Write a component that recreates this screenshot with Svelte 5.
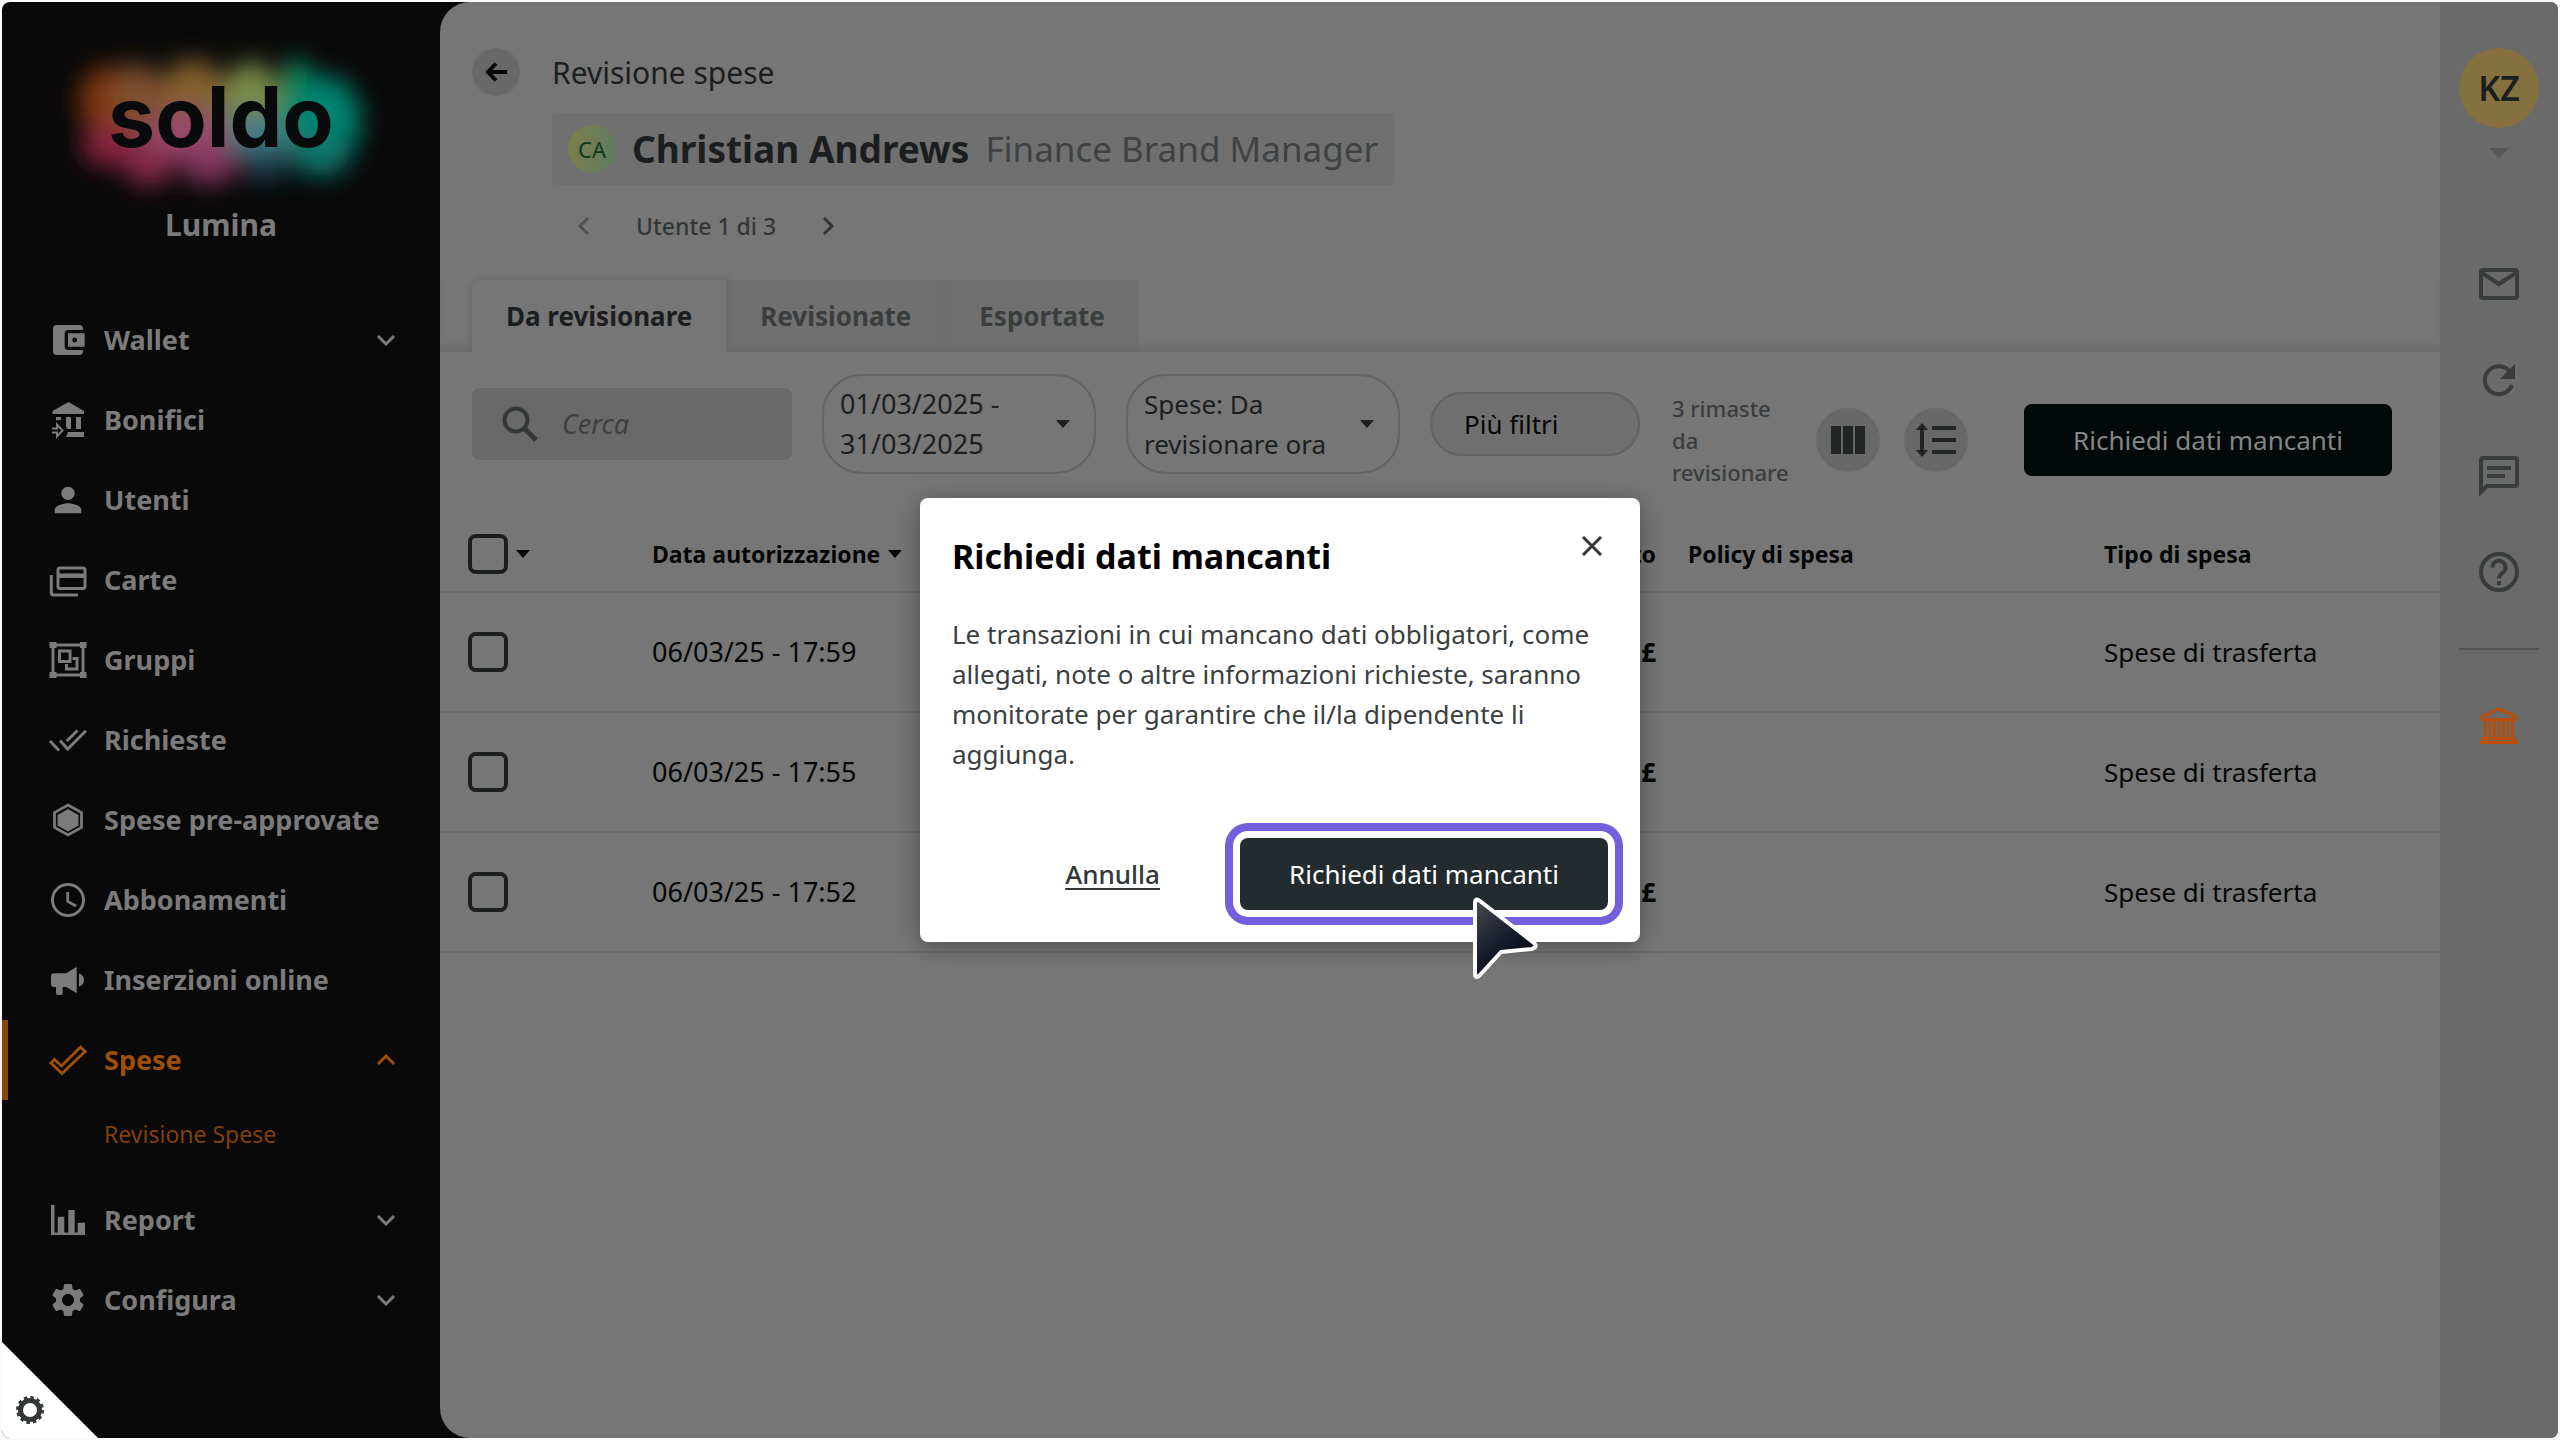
<script>
  const before = [
    { icon: 'wallet', label: 'Wallet', chevron: true },
    { icon: 'transfer', label: 'Bonifici' },
    { icon: 'user', label: 'Utenti' },
    { icon: 'cards', label: 'Carte' },
    { icon: 'group', label: 'Gruppi' },
    { icon: 'requests', label: 'Richieste' },
    { icon: 'hexagon', label: 'Spese pre-approvate' },
    { icon: 'clock', label: 'Abbonamenti' },
    { icon: 'horn', label: 'Inserzioni online' }
  ];
  const after = [
    { icon: 'report', label: 'Report', chevron: true },
    { icon: 'gear', label: 'Configura', chevron: true }
  ];
  const rows = [
    { id: 1, date: '06/03/25 - 17:59', amount: '£', type: 'Spese di trasferta' },
    { id: 2, date: '06/03/25 - 17:55', amount: '£', type: 'Spese di trasferta' },
    { id: 3, date: '06/03/25 - 17:52', amount: '£', type: 'Spese di trasferta' }
  ];
</script>

{#snippet icon(name)}
  <svg class="icon" viewBox="0 0 40 40" fill="none" stroke="currentColor" stroke-width="3" aria-hidden="true">
    {#if name === 'wallet'}
      <path transform="scale(1.6667)" fill="currentColor" stroke="none" d="M21 18v1c0 1.1-.9 2-2 2H5c-1.11 0-2-.9-2-2V5c0-1.1.89-2 2-2h14c1.1 0 2 .9 2 2v1h-9c-1.11 0-2 .9-2 2v8c0 1.1.89 2 2 2h9zm-9-2h10V8H12v8zm4-2.5c-.83 0-1.5-.67-1.5-1.5s.67-1.5 1.5-1.5 1.5.67 1.5 1.5-.67 1.5-1.5 1.5z" />
    {:else if name === 'transfer'}
      <path fill="currentColor" stroke="none" d="M4.5 11 20.5 2 36 11v3H4.5zM8 17h5v3l-4 0-1 1zM18 17h5v12h-4l-1-3zM28 17h5v12h-5zM20 32h16v5H18z" />
      <path stroke-width="2" d="M4 28.5h5v-4l5.5 6-5.5 6v-4H4" />
    {:else if name === 'user'}
      <path transform="scale(1.6667)" fill="currentColor" stroke="none" d="M12 12c2.21 0 4-1.79 4-4s-1.79-4-4-4-4 1.79-4 4 1.79 4 4 4zm0 2c-2.67 0-8 1.34-8 4v2h16v-2c0-2.66-5.33-4-8-4z" />
    {:else if name === 'cards'}
      <rect x="10" y="8" width="27" height="20.5" rx="2" />
      <path stroke-width="4.5" d="M10 15.7h27" />
      <path d="M3.3 15v17.500q0 2.500 2.500 2.500H30" />
    {:else if name === 'group'}
      <path stroke-width="3" d="M5 5h30v30H5z" />
      <path fill="currentColor" stroke="none" d="M1.500 2h7v6h-7zM32 2h6.500v6H32zM1.500 32h7v6h-7zM32 32h6.500v6H32z" />
      <path d="M11.500 11h10.500v10.500H11.500zM24.500 18.500H29V29H18.500V24" />
    {:else if name === 'requests'}
      <path d="M12 20.500l7.700 8.500L38 10.700M18.700 21 29.500 10.500M2 21l9 9.500" />
    {:else if name === 'hexagon'}
      <path stroke-width="2.800" d="M20 5l13.500 7.500v15L20 35 6.500 27.500v-15z" />
      <path fill="currentColor" stroke="none" d="M20 9l10.500 6v10.500L20 31.500 9.500 25.500V15z" />
    {:else if name === 'clock'}
      <circle cx="20" cy="20" r="15.5" />
      <path stroke-width="2.800" d="M19.700 12v9.500l8.300 4.500" />
    {:else if name === 'horn'}
      <path fill="currentColor" stroke="none" d="M6 13.300h12L28.700 7v26L18 27h-3.300v6q0 2-2 2H10q-2 0-2-2v-6H6q-3 0-3-3v-8q0-2.700 3-2.700zM31 13.500q5 1.500 5 6.500t-5 6.500z" />
    {:else if name === 'expense'}
      <path d="M3 23l3.500-3.500 7 6.500L32.500 7l4.500 4.500-23 22z" />
    {:else if name === 'report'}
      <path fill="currentColor" stroke="none" d="M3 5h3.500v27.500h3.200V16.700h6.600v15.800h4V10h6.400v22.500h3v-9.800H37V35H3z" />
    {:else if name === 'gear'}
      <path transform="scale(1.6667)" fill="currentColor" stroke="none" d="M19.140 12.940c.04-.3.060-.61.060-.94 0-.32-.02-.64-.07-.94l2.030-1.580c.18-.14.23-.41.12-.61l-1.920-3.320c-.12-.22-.37-.29-.59-.22l-2.390.96c-.5-.38-1.030-.7-1.620-.94l-.36-2.540c-.04-.24-.24-.41-.48-.41h-3.840c-.24 0-.43.17-.47.41l-.36 2.540c-.59.24-1.130.57-1.620.94l-2.390-.96c-.22-.08-.47 0-.59.22L2.740 8.870c-.12.21-.08.47.12.61l2.030 1.580c-.05.3-.09.63-.09.94s.02.64.07.94l-2.030 1.580c-.18.14-.23.41-.12.61l1.920 3.320c.12.22.37.29.59.22l2.390-.96c.5.38 1.030.7 1.620.94l.36 2.540c.05.24.24.41.48.41h3.840c.24 0 .44-.17.47-.41l.36-2.540c.59-.24 1.130-.56 1.620-.94l2.390.96c.22.08.47 0 .59-.22l1.920-3.320c.12-.22.070-.47-.12-.61l-2.010-1.580zM12 15.600c-1.980 0-3.600-1.620-3.600-3.600s1.620-3.600 3.600-3.600 3.600 1.620 3.600 3.600-1.620 3.600-3.600 3.600z" />
    {:else if name === 'mail'}
      <rect x="2" y="6" width="36" height="28" rx="2" stroke-width="4" />
      <path stroke-width="4" d="M3 9l17 11L37 9" />
    {:else if name === 'refresh'}
      <path stroke-width="4" d="M30 10.500A14 14 0 1 0 33 25" />
      <path fill="currentColor" stroke="none" d="M36 4v15H21z" />
    {:else if name === 'chat'}
      <path stroke-width="4" d="M4 2h32q2 0 2 2v24q0 2-2 2H8l-6 6V4q0-2 2-2zM8 12h24M8 20h18" />
    {:else if name === 'help'}
      <circle cx="20" cy="20" r="18" stroke-width="4" />
      <path stroke-width="4" d="M13.500 15.500a6.500 6.500 0 1 1 11 4.500q-4.500 3.500-4.500 6.500M20 29v4" />
    {:else if name === 'bank'}
      <path stroke-width="3" d="M3.500 13.500v-3L20 3l16.500 7.500v3zM6.500 14v18M15.500 14v18M24.500 14v18M33.500 14v18M2.500 36.500q0-4 4-4h27q4 0 4 4z" />
      <path stroke-width="2" d="M11 15v16M20 15v16M29 15v16" />
    {/if}
  </svg>
{/snippet}

{#snippet chevron(dir)}
  <svg class="chevron {dir}" viewBox="0 0 20 20" fill="none" stroke="currentColor" stroke-width="3" aria-hidden="true"><path d="M2 6l8 8 8-8" /></svg>
{/snippet}

{#snippet caret()}
  <svg class="caret" viewBox="0 0 14 8" fill="currentColor" aria-hidden="true"><path d="M0 0h14L7 8z" /></svg>
{/snippet}

<div class="page">
  <div class="frame">
    <aside class="sidebar">
      <div class="logo">
        <svg class="glow" viewBox="0 0 320 160" aria-hidden="true">
          <defs>
            <filter id="soft" filterUnits="userSpaceOnUse" x="-60" y="-60" width="440" height="280"><feGaussianBlur stdDeviation="12" /></filter>
          </defs>
          <g filter="url(#soft)">
            <rect x="40" y="50" width="110" height="62" rx="20" fill="#7c4a42" />
            <rect x="140" y="50" width="110" height="60" rx="20" fill="#4b7a62" />
            <ellipse cx="46" cy="62" rx="28" ry="36" fill="#80340e" />
            <ellipse cx="50" cy="106" rx="30" ry="20" fill="#8a2140" />
            <ellipse cx="88" cy="122" rx="26" ry="24" fill="#842747" />
            <ellipse cx="76" cy="56" rx="26" ry="32" fill="#80502f" />
            <ellipse cx="132" cy="50" rx="32" ry="30" fill="#84602e" />
            <ellipse cx="128" cy="94" rx="42" ry="24" fill="#98486a" />
            <ellipse cx="148" cy="124" rx="28" ry="20" fill="#83365c" />
            <ellipse cx="190" cy="52" rx="26" ry="30" fill="#7c8c4a" />
            <ellipse cx="198" cy="96" rx="32" ry="24" fill="#457a84" />
            <ellipse cx="204" cy="124" rx="24" ry="16" fill="#1c4050" />
            <ellipse cx="236" cy="60" rx="18" ry="42" fill="#108a5c" />
            <ellipse cx="264" cy="80" rx="36" ry="44" fill="#06836f" />
            <ellipse cx="260" cy="114" rx="30" ry="22" fill="#07746a" />
          </g>
        </svg>
        <span class="wordmark">soldo</span>
      </div>
      <div class="company">Lumina</div>
      <nav>
        {#each before as item}
          <a href="#{item.icon}">{@render icon(item.icon)}<span>{item.label}</span>{#if item.chevron}{@render chevron('down')}{/if}</a>
        {/each}
        <a class="active" href="#expense">{@render icon('expense')}<span>Spese</span>{@render chevron('up')}</a>
        <a class="sub" href="#review">Revisione Spese</a>
        {#each after as item}
          <a href="#{item.icon}">{@render icon(item.icon)}<span>{item.label}</span>{@render chevron('down')}</a>
        {/each}
      </nav>
      <button class="corner" aria-label="Impostazioni cookie">
        <svg viewBox="0 0 96 96" aria-hidden="true">
          <path d="M0 0l96 96H0z" fill="#fff" />
          <circle cx="28" cy="68" r="9.5" fill="none" stroke="#333738" stroke-width="5" />
          <circle cx="28" cy="68" r="12" fill="none" stroke="#333738" stroke-width="4" stroke-dasharray="3.300 2.983" />
        </svg>
      </button>
    </aside>

    <main>
      <header>
        <button class="back" aria-label="Indietro">
          <svg viewBox="0 0 22 20" fill="none" stroke="currentColor" stroke-width="4" aria-hidden="true"><path d="M11 1.500L3 10l8 8.500M3 10h19" /></svg>
        </button>
        <div class="heading">
          <h1>Revisione spese</h1>
          <div class="person">
            <span class="initials">CA</span>
            <strong>Christian Andrews</strong>
            <span class="role">Finance Brand Manager</span>
          </div>
          <div class="pager">
            <button class="off" aria-label="Precedente">{@render chevron('left')}</button>
            <span>Utente 1 di 3</span>
            <button aria-label="Successivo">{@render chevron('right')}</button>
          </div>
        </div>
      </header>

      <div class="tabs" role="tablist">
        <button role="tab" aria-selected="true" class="on">Da revisionare</button>
        <button role="tab" aria-selected="false">Revisionate</button>
        <button role="tab" aria-selected="false">Esportate</button>
      </div>

      <div class="toolbar">
        <div class="filters">
          <label class="search">
            <svg viewBox="0 0 36 36" fill="none" stroke="currentColor" aria-hidden="true"><circle cx="14" cy="14" r="11.5" stroke-width="4" /><path d="M22 22l12 12" stroke-width="5" /></svg>
            <input type="text" placeholder="Cerca" aria-label="Cerca" />
          </label>
          <button class="pill dates" aria-haspopup="dialog"><span>01/03/2025 -<br />31/03/2025</span>{@render caret()}</button>
          <button class="pill" aria-haspopup="listbox"><span>Spese: Da<br />revisionare ora</span>{@render caret()}</button>
          <button class="pill more">Più filtri</button>
        </div>
        <div class="tools">
          <p>3 rimaste da revisionare</p>
          <button class="round" aria-label="Colonne">
            <svg viewBox="0 0 40 40" fill="currentColor" aria-hidden="true"><path d="M3 6h10v28H3zM15 6h10v28H15zM27 6h10v28H27z" /></svg>
          </button>
          <button class="round" aria-label="Altezza righe">
            <svg viewBox="0 0 40 40" fill="currentColor" aria-hidden="true"><path d="M6 3l6 7H8v20h4l-6 7-6-7h4V10H0zM16 6h24v4H16zM16 18h24v4H16zM16 30h24v4H16z" /></svg>
          </button>
          <button class="primary dim">Richiedi dati mancanti</button>
        </div>
      </div>

      <table>
        <colgroup><col class="c-check" /><col /><col class="c-amount" /><col class="c-policy" /><col class="c-type" /></colgroup>
        <thead>
          <tr>
            <th><span class="pick"><input type="checkbox" aria-label="Seleziona tutto" />{@render caret()}</span></th>
            <th><span class="sort">Data autorizzazione{@render caret()}</span></th>
            <th class="num">Importo</th>
            <th>Policy di spesa</th>
            <th>Tipo di spesa</th>
          </tr>
        </thead>
        <tbody>
          {#each rows as row (row.id)}
            <tr>
              <td><span class="pick"><input type="checkbox" aria-label="Seleziona {row.date}" /></span></td>
              <td class="date">{row.date}</td>
              <td class="num">{row.amount}</td>
              <td></td>
              <td>{row.type}</td>
            </tr>
          {/each}
        </tbody>
      </table>
    </main>

    <aside class="rail">
      <button class="avatar">KZ</button>
      <svg class="railcaret" viewBox="0 0 20 10" aria-hidden="true"><path d="M0 0h20L10 10z" fill="#555758" /></svg>
      <div class="railicons">
        <button aria-label="Posta">{@render icon('mail')}</button>
        <button aria-label="Aggiorna">{@render icon('refresh')}</button>
        <button aria-label="Messaggi">{@render icon('chat')}</button>
        <button aria-label="Aiuto">{@render icon('help')}</button>
      </div>
      <hr />
      <button class="bank" aria-label="Banca">{@render icon('bank')}</button>
    </aside>
  </div>

  <div class="layer">
    <div class="modal" role="dialog" aria-labelledby="modal-title">
      <div class="modalhead">
        <h2 id="modal-title">Richiedi dati mancanti</h2>
        <button class="close" aria-label="Chiudi">
          <svg viewBox="0 0 20 20" fill="none" stroke="currentColor" stroke-width="3" aria-hidden="true"><path d="M1 1l18 18M19 1L1 19" /></svg>
        </button>
      </div>
      <p>Le transazioni in cui mancano dati obbligatori, come allegati, note o altre informazioni richieste, saranno monitorate per garantire che il/la dipendente li aggiunga.</p>
      <div class="actions">
        <button class="cancel">Annulla</button>
        <div class="target">
          <button class="primary">Richiedi dati mancanti</button>
          <svg class="cursor" viewBox="0 0 68 84" aria-hidden="true">
            <defs><linearGradient id="pointer" x1="0" y1="0" x2=".6" y2="1"><stop offset="0" stop-color="#4a4b50" /><stop offset=".6" stop-color="#161b2c" /><stop offset="1" stop-color="#080a10" /></linearGradient></defs>
            <path d="M4 7q0-6 5-2L63 47q4 4-2 6l-31 3L9 79q-5 5-5-2z" fill="url(#pointer)" stroke="#fff" stroke-width="4" stroke-linejoin="round" />
          </svg>
        </div>
      </div>
    </div>
  </div>
</div>

<style>
  :global(body) { background: #f8f9fa; }
  * { box-sizing: border-box; }
  .page { position: relative; padding: 2px; font-family: 'Noto Sans', 'Open Sans', sans-serif; font-size: 26px; line-height: 40px; color: #050606; }
  button { font: inherit; color: inherit; background: none; border: 0; padding: 0; }
  svg { display: block; flex: none; }
  h1, h2, p { margin: 0; }
  .frame { display: flex; min-height: calc(100vh - 4px); border-radius: 8px; overflow: hidden; background: #090909; }
  .icon { width: 40px; height: 40px; }
  .chevron { width: 20px; height: 20px; }
  .up { transform: rotate(180deg); }
  .left { transform: rotate(90deg); }
  .right { transform: rotate(-90deg); }
  .caret { width: 14px; height: 8px; }

  .sidebar { position: relative; flex: none; width: 438px; padding-top: 38px; color: #7b7b7b; font-weight: 700; }
  .logo { display: grid; align-content: start; justify-content: center; height: 160px; }
  .logo > * { grid-area: 1 / 1; }
  .glow { width: 320px; height: 160px; overflow: visible; }
  .wordmark { position: relative; font-family: Inter, sans-serif; font-size: 84px; line-height: 154px; font-weight: 700; color: #090a0c; text-align: center; }
  .company { font-size: 30px; line-height: 44px; text-align: center; margin: 3px 0 53px; }
  nav { display: flex; flex-direction: column; }
  nav a { display: flex; align-items: center; gap: 16px; height: 80px; padding: 0 44px 0 46px; color: inherit; text-decoration: none; font-size: 27px; white-space: nowrap; }
  nav a span { flex: 1; }
  nav .active { color: #9d5009; border-left: 6px solid #8b4700; border-radius: 0 6px 6px 0; padding-left: 40px; }
  nav .sub { height: 68px; margin-bottom: 12px; padding-left: 102px; font-size: 23px; font-weight: 400; color: #80400b; }
  .corner { position: absolute; left: 0; bottom: 0; }
  .corner svg { width: 96px; height: 96px; }

  main { flex: 1; min-width: 0; background: #767676; border-radius: 30px 0 0 30px; overflow: hidden; }
  header { display: flex; gap: 32px; padding: 46px 32px 28px; }
  .back { display: grid; place-items: center; width: 48px; height: 48px; border-radius: 50%; background: #686868; }
  .back svg { width: 22px; height: 20px; }
  .heading { display: flex; flex-direction: column; align-items: flex-start; }
  h1 { font-size: 30px; line-height: 50px; font-weight: 400; color: #1b1e1f; }
  .person { display: flex; align-items: center; gap: 16px; height: 72px; margin: 15px 0; padding: 0 16px; background: #707070; color: #1b1e1f; font-size: 37px; border-radius: 4px; }
  .person strong { font-weight: 700; }
  .initials { display: grid; place-items: center; width: 48px; height: 48px; border-radius: 50%; font-size: 22px; color: #0d3a1d; background: linear-gradient(100deg, #7d7f4a, #5f7a64); }
  .role { font-size: 35px; color: #3f4243; }
  .pager { display: flex; align-items: center; gap: 42px; height: 52px; padding-left: 22px; font-size: 23px; font-weight: 500; color: #333637; }
  .pager .off { color: #4f5152; }

  .tabs { display: flex; height: 72px; padding-left: 32px; font-weight: 700; box-shadow: inset 0 -8px 6px -2px #6d6d6d; }
  .tabs button { height: 72px; padding: 0 34px; color: #3a3d3e; background: #707070; box-shadow: inset 0 -6px 6px -2px #6a6a6a; }
  .tabs .on { color: #1b1e1f; background: #767676; box-shadow: 0 0 6px 2px #6a6a6a; clip-path: inset(-8px -8px 0 -8px); border-radius: 8px 0 0 0; }

  .toolbar { display: flex; align-items: flex-start; justify-content: space-between; padding: 22px 48px 24px 32px; min-height: 164px; }
  .filters { display: flex; align-items: center; gap: 30px; height: 100px; }
  .search { display: flex; align-items: center; gap: 24px; width: 320px; height: 72px; padding: 0 30px; border-radius: 8px; background: #696969; color: #333738; }
  .search svg { width: 36px; height: 36px; }
  .search input { width: 100%; min-width: 0; font: inherit; font-size: 27px; font-style: italic; border: 0; padding: 0; background: none; }
  .search input::placeholder { color: #3b4041; opacity: 1; }
  .pill { display: flex; align-items: center; justify-content: space-between; width: 274px; height: 100px; padding: 0 24px 0 16px; border: 2px solid #636363; border-radius: 40px; text-align: left; color: #1b1e1f; white-space: nowrap; }
  .pill.dates { font-size: 27px; }
  .pill.more { width: 210px; height: 64px; padding: 0 32px; color: #050606; background: #707070; border-radius: 32px; }
  .tools { display: flex; align-items: center; gap: 24px; margin-top: 18px; height: 96px; }
  .tools p { width: 120px; font-size: 22px; line-height: 32px; color: #3a3d3e; font-weight: 500; }
  .round { display: grid; place-items: center; width: 64px; height: 64px; border-radius: 50%; background: #686868; color: #222526; }
  .round svg { width: 40px; height: 40px; }
  .primary { height: 72px; width: 368px; border-radius: 8px; background: #232b2e; color: #fff; white-space: nowrap; }
  .dim { background: #030808; color: #848686; margin-left: 32px; }

  table { width: 100%; table-layout: fixed; border-collapse: collapse; }
  .c-check { width: 196px; }
  .c-amount { width: 300px; }
  .c-policy { width: 416px; }
  .c-type { width: 352px; }
  th, td { padding: 0 16px; text-align: left; border-bottom: 2px solid #6b6b6b; height: 120px; }
  th { height: 76px; font-size: 23px; font-weight: 700; }
  th:first-child, td:first-child { padding-left: 28px; }
  .date { font-size: 27px; }
  .num { text-align: right; font-weight: 700; }
  .pick, .sort { display: flex; align-items: center; gap: 8px; }
  .pick input { appearance: none; width: 40px; height: 40px; margin: 0; border: 4px solid #1b1e1f; border-radius: 8px; }

  .rail { flex: none; width: 118px; display: flex; flex-direction: column; align-items: center; padding-top: 46px; background: #6a6a6a; color: #393c3d; }
  .avatar { width: 80px; height: 80px; border-radius: 50%; background: #85703f; color: #1b1e1f; font-size: 34px; font-weight: 600; }
  .railcaret { width: 20px; height: 10px; margin: 20px 0 106px; }
  .railicons { display: flex; flex-direction: column; gap: 56px; }
  .rail hr { width: 80px; height: 2px; margin: 56px 0; border: 0; background: #525455; }
  .bank { color: #b94e04; }

  .layer { position: absolute; inset: 0; display: grid; place-items: center; }
  .modal { width: 720px; padding: 32px; border-radius: 8px; background: #fff; box-shadow: 0 4px 24px rgba(0, 0, 0, 0.35); }
  .modalhead { display: flex; justify-content: space-between; align-items: flex-start; padding-bottom: 32px; }
  h2 { font-size: 34px; line-height: 52px; font-weight: 700; color: #000; }
  .close { width: 32px; height: 32px; display: grid; place-items: center; color: #333738; }
  .close svg { width: 20px; height: 20px; }
  .modal p { color: #3a4042; }
  .actions { display: flex; justify-content: flex-end; align-items: center; gap: 80px; margin-top: 64px; }
  .cancel { color: #333738; font-size: 26px; font-weight: 500; text-decoration: underline; text-underline-offset: 4px; text-decoration-thickness: 2px; }
  .target { position: relative; border-radius: 8px; outline: 8px solid #755ede; outline-offset: 7px; }
  .cursor { position: absolute; left: 231px; top: 58px; width: 68px; height: 84px; }
</style>
